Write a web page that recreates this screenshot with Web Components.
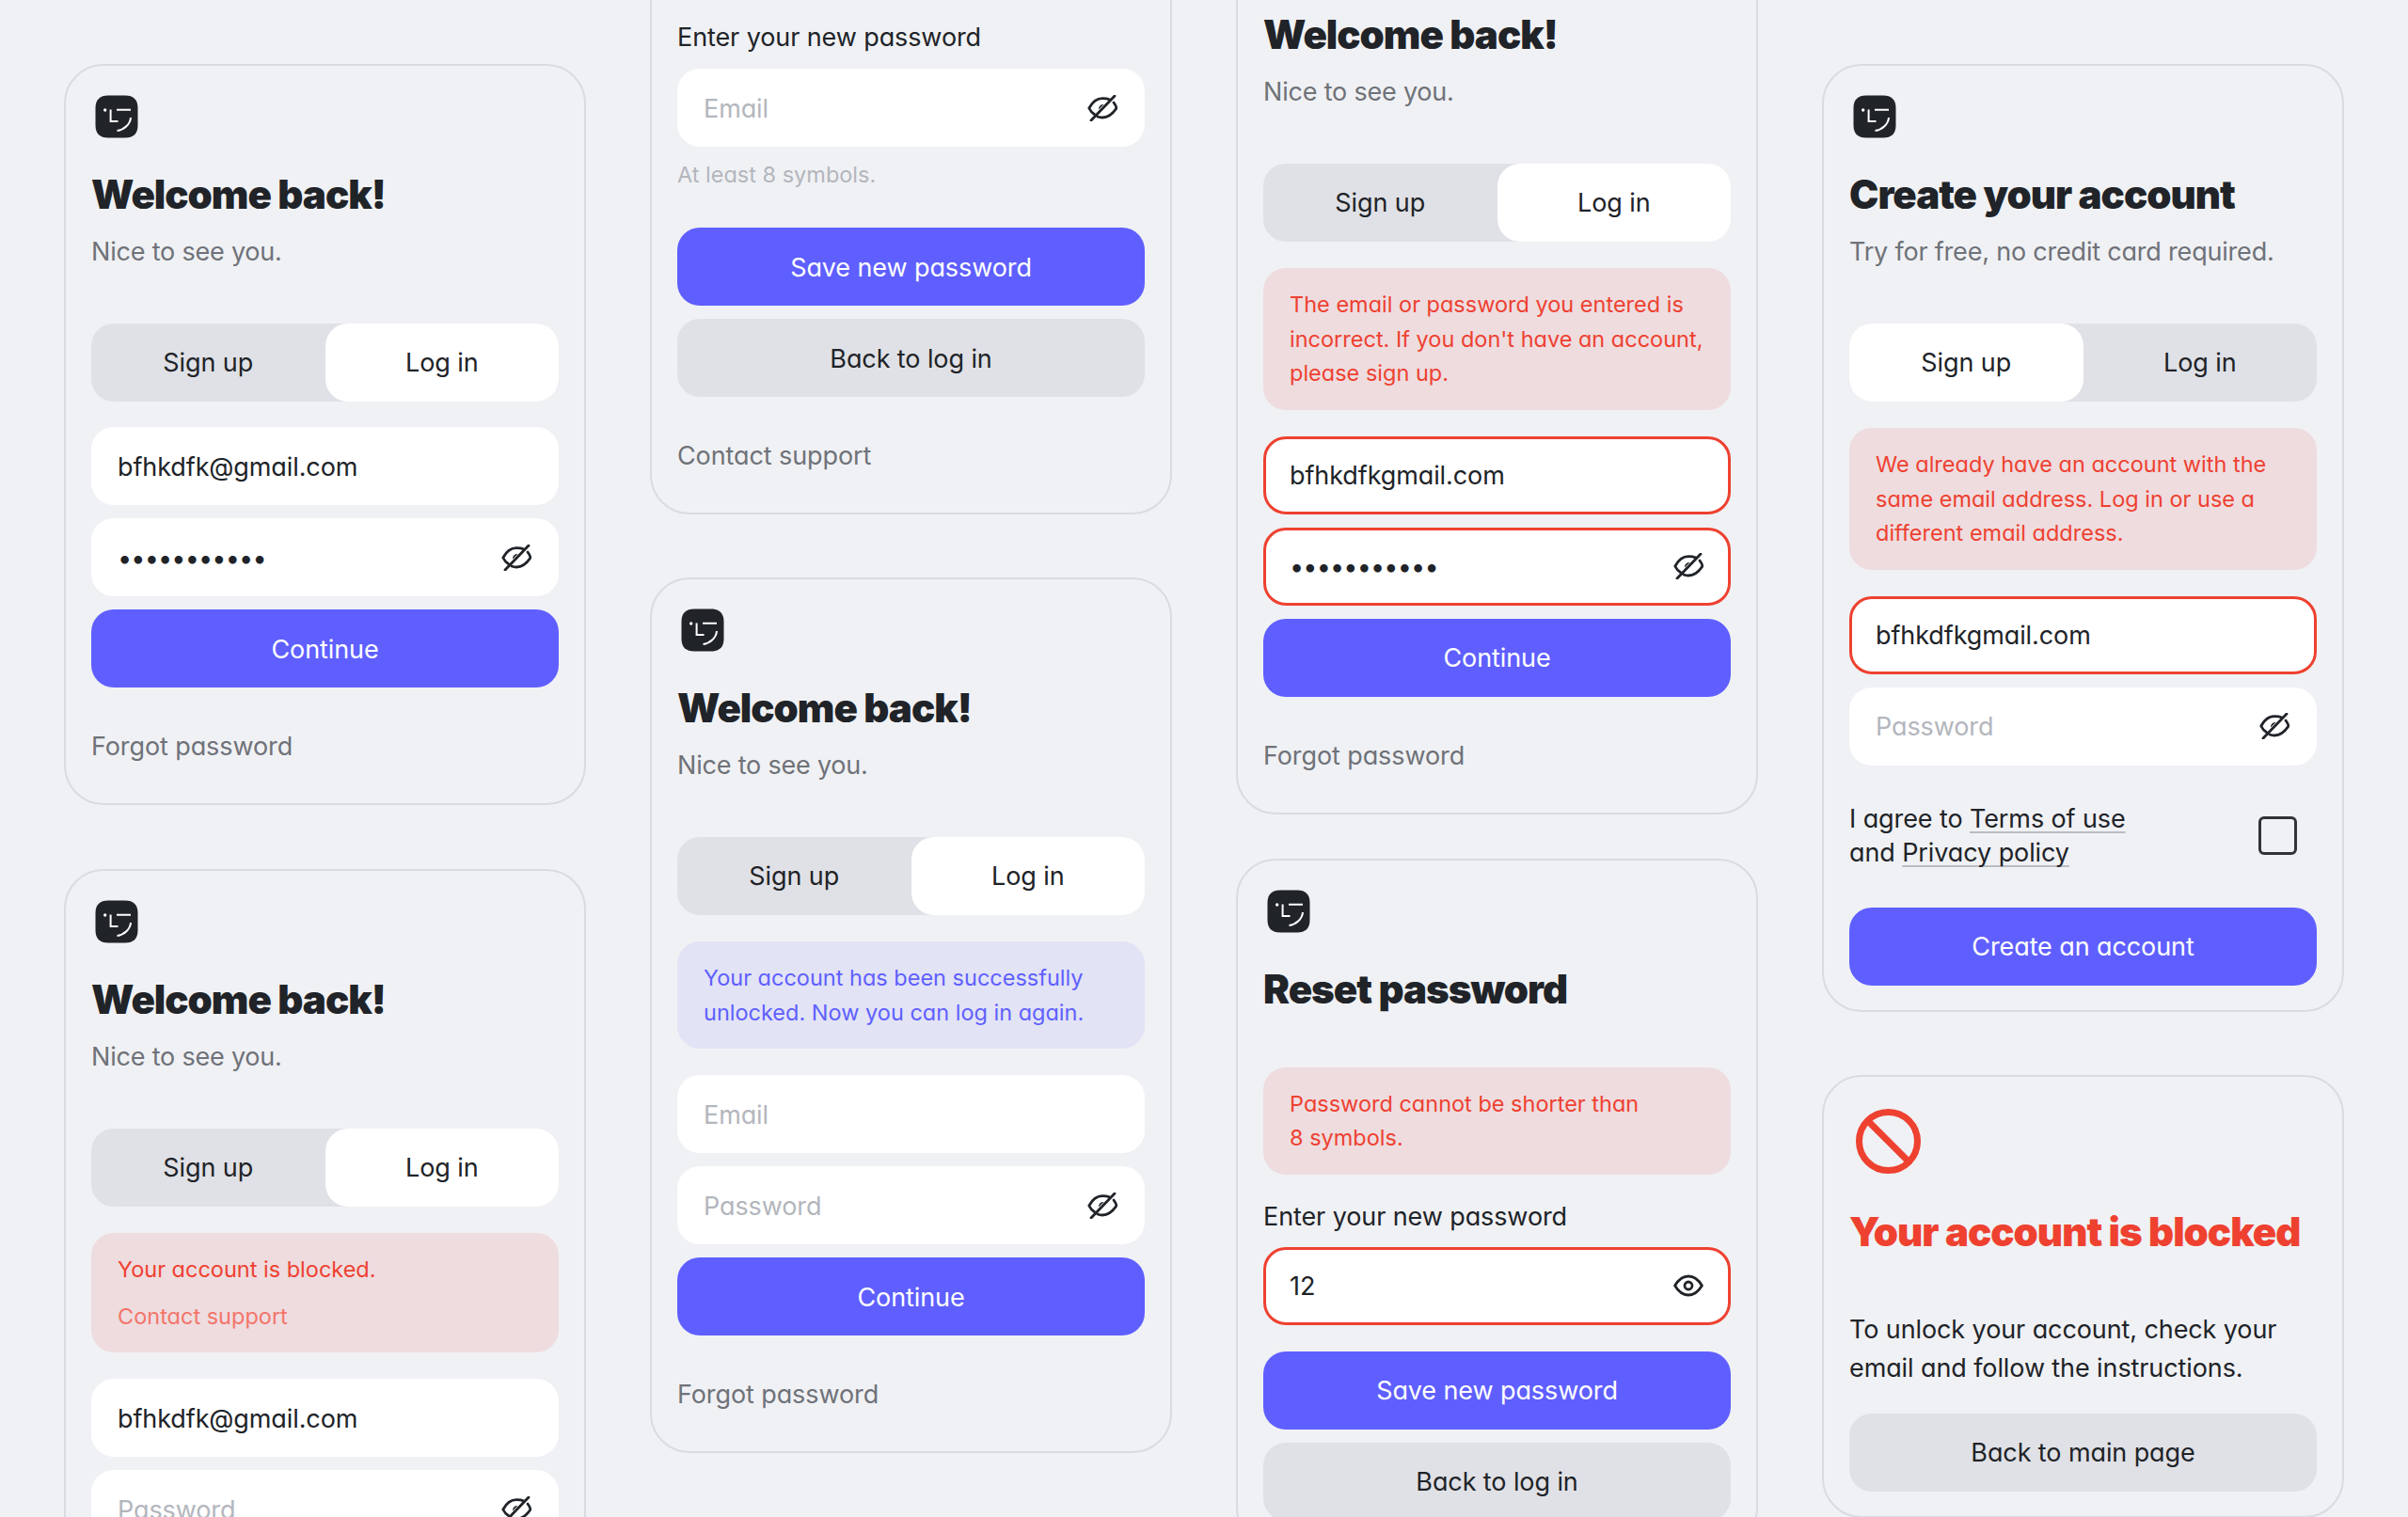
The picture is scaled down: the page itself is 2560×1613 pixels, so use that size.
<!DOCTYPE html>
<html lang="en">
<head>
<meta charset="utf-8">
<title>Auth screens</title>
<style>
  html, body { margin: 0; height: 1613px; overflow: hidden; background: #f0f1f4; }
  body { font-family: Inter, "Liberation Sans", sans-serif; color: #202328; }
</style>
</head>
<body>
<auth-board>
  <auth-column>
    <auth-card>
      <auth-logo></auth-logo>
      <auth-title>Welcome back!</auth-title>
      <auth-sub>Nice to see you.</auth-sub>
      <auth-tabs active="login"></auth-tabs>
      <auth-field>bfhkdfk@gmail.com</auth-field>
      <auth-field eye="off" secret>•••••••••••</auth-field>
      <auth-button>Continue</auth-button>
      <auth-link>Forgot password</auth-link>
    </auth-card>
    <auth-card>
      <auth-logo></auth-logo>
      <auth-title>Welcome back!</auth-title>
      <auth-sub>Nice to see you.</auth-sub>
      <auth-tabs active="login"></auth-tabs>
      <auth-notice kind="error">
        <div>Your account is blocked.</div>
        <div class="more">Contact support</div>
      </auth-notice>
      <auth-field>bfhkdfk@gmail.com</auth-field>
      <auth-field eye="off" placeholder>Password</auth-field>
    </auth-card>
  </auth-column>

  <auth-column style="--offset:-108px;--gap:67px">
    <auth-card style="--top:58px">
      <auth-label>Enter your new password</auth-label>
      <auth-field eye="off" placeholder>Email</auth-field>
      <auth-hint>At least 8 symbols.</auth-hint>
      <auth-button>Save new password</auth-button>
      <auth-button variant="ghost">Back to log in</auth-button>
      <auth-link>Contact support</auth-link>
    </auth-card>
    <auth-card>
      <auth-logo></auth-logo>
      <auth-title>Welcome back!</auth-title>
      <auth-sub>Nice to see you.</auth-sub>
      <auth-tabs active="login"></auth-tabs>
      <auth-notice kind="info">Your account has been successfully<br>unlocked. Now you can log in again.</auth-notice>
      <auth-field placeholder>Email</auth-field>
      <auth-field eye="off" placeholder>Password</auth-field>
      <auth-button>Continue</auth-button>
      <auth-link>Forgot password</auth-link>
    </auth-card>
  </auth-column>

  <auth-column style="--offset:-170px;--gap:47px">
    <auth-card>
      <auth-logo></auth-logo>
      <auth-title>Welcome back!</auth-title>
      <auth-sub>Nice to see you.</auth-sub>
      <auth-tabs active="login"></auth-tabs>
      <auth-notice kind="error">The email or password you entered is<br>incorrect. If you don't have an account,<br>please sign up.</auth-notice>
      <auth-field error>bfhkdfkgmail.com</auth-field>
      <auth-field eye="off" error secret>•••••••••••</auth-field>
      <auth-button>Continue</auth-button>
      <auth-link>Forgot password</auth-link>
    </auth-card>
    <auth-card>
      <auth-logo></auth-logo>
      <auth-title spaced>Reset password</auth-title>
      <auth-notice kind="error">Password cannot be shorter than<br>8 symbols.</auth-notice>
      <auth-label style="margin-top:-3px;margin-bottom:12px">Enter your new password</auth-label>
      <auth-field eye="on" error style="margin-bottom:28px">12</auth-field>
      <auth-button>Save new password</auth-button>
      <auth-button variant="ghost">Back to log in</auth-button>
    </auth-card>
  </auth-column>

  <auth-column style="--gap:67px">
    <auth-card>
      <auth-logo></auth-logo>
      <auth-title>Create your account</auth-title>
      <auth-sub>Try for free, no credit card required.</auth-sub>
      <auth-tabs active="signup"></auth-tabs>
      <auth-notice kind="error">We already have an account with the<br>same email address. Log in or use a<br>different email address.</auth-notice>
      <auth-field error>bfhkdfkgmail.com</auth-field>
      <auth-field eye="off" placeholder>Password</auth-field>
      <auth-agree>I agree to <a>Terms of use</a><br>and <a>Privacy policy</a></auth-agree>
      <auth-button>Create an account</auth-button>
    </auth-card>
    <auth-card>
      <auth-block-icon></auth-block-icon>
      <auth-title spaced danger>Your account is blocked</auth-title>
      <auth-text>To unlock your account, check your<br>email and follow the instructions.</auth-text>
      <auth-button variant="ghost">Back to main page</auth-button>
    </auth-card>
  </auth-column>
</auth-board>

<script>
const eyeOff = `<svg width="32" height="28" viewBox="0 0 32 28" fill="none" stroke="#202328" stroke-width="2.8" stroke-linecap="round" stroke-linejoin="round">
  <path d="M24 5C21.5 4 19 3.7 16 3.7C10 3.7 5 8 1.8 14C3 16.5 5 19 7.5 20.5"/>
  <path d="M28 8C29.5 10 30.5 12 31 14C27 20 22 24 16 24C14 24 12.5 23.7 11 23"/>
  <path d="M29 1L4 27"/>
  <path d="M17.5 10A5 5 0 0 0 12 15.5Z" fill="#202328" stroke="none"/>
</svg>`;
const eyeOn = `<svg width="32" height="24" viewBox="0 0 32 24" fill="none" stroke="#202328" stroke-width="2.8" stroke-linejoin="round">
  <path d="M1.6 12C5.5 5.5 10.5 2 16 2C21.5 2 26.5 5.5 30.4 12C26.5 18.5 21.5 22 16 22C10.5 22 5.5 18.5 1.6 12Z"/>
  <circle cx="16" cy="12" r="4"/>
</svg>`;

// small helper, every element is just styles + markup in an open shadow root
function component(name, css, html) {
  customElements.define(name, class extends HTMLElement {
    connectedCallback() {
      this.attachShadow({ mode: 'open' });
      const body = typeof html === 'function' ? html(this) : html;
      this.shadowRoot.innerHTML = `<style>${css}</style>${body}`;
    }
  });
}

const copy = `
  font-size: 27px;
  letter-spacing: -0.1px;
  font-feature-settings: "cv11";
`;
const fieldBox = `
  box-sizing: border-box;
  height: 83px;
  border-radius: 24px;
  ${copy}
`;

component('auth-board', `
  :host {
    display: grid;
    grid-template-columns: repeat(4, 555px);
    column-gap: 68px;
    align-items: start;
    padding: 68px;
  }
`, '<slot></slot>');

component('auth-column', `
  :host {
    display: flex;
    flex-direction: column;
    gap: var(--gap, 68px);
    margin-top: var(--offset, 0);
  }
`, '<slot></slot>');

component('auth-card', `
  :host {
    display: flex;
    flex-direction: column;
    box-sizing: border-box;
    padding: var(--top, 31px) 27px 26px;
    border: 2px solid #d9dbe1;
    border-radius: 42px;
  }
`, '<slot></slot>');

component('auth-logo', `
  :host { display: block; height: 46px; margin-left: 4px; }
  svg { display: block; }
`, `<svg width="46" height="46" viewBox="0 0 46 46" fill="none">
  <path d="M14 .5H32C41 .5 45.5 5 45.5 14V32C45.5 41 41 45.5 32 45.5H14C5 45.5 .5 41 .5 32V14C.5 5 5 .5 14 .5Z" fill="#202328"/>
  <circle cx="10.7" cy="16" r="1.7" fill="#fff"/>
  <path d="M16.6 15.5V28H24.5M23 15.7H38M38 24C37.5 31 31 37 23.5 38" stroke="#fff" stroke-width="2"/>
</svg>`);

component('auth-block-icon', `
  :host { display: block; height: 69px; margin: 3px 0 2px 7px; }
  svg { display: block; }
`, `<svg width="69" height="69" viewBox="0 0 69 69" fill="none" stroke="#ee4130" stroke-width="7">
  <circle cx="34.5" cy="34.5" r="31"/>
  <path d="M13 13L56 56"/>
</svg>`);

component('auth-title', `
  :host {
    display: block;
    margin: 35px 0 16px;
    font-size: 42px;
    line-height: 50px;
    font-weight: 900;
    letter-spacing: -1px;
    white-space: nowrap;
  }
  :host([spaced]) { margin-bottom: 57px; }
  :host([danger]) { color: #ee4130; }
`, '<slot></slot>');

component('auth-sub', `
  :host {
    display: block;
    margin-bottom: 56px;
    line-height: 40px;
    color: #6f7279;
    ${copy}
    letter-spacing: -0.2px;
  }
`, '<slot></slot>');

component('auth-tabs', `
  :host {
    display: grid;
    grid-template-columns: 1fr 1fr;
    margin-bottom: 27px;
    background: #e0e1e6;
    ${fieldBox}
  }
  span { display: flex; align-items: center; justify-content: center; border-radius: 24px; }
  .on { background: #fff; }
`, el => {
  const login = el.getAttribute('active') === 'login';
  return `<span class="${login ? '' : 'on'}">Sign up</span><span class="${login ? 'on' : ''}">Log in</span>`;
});

component('auth-field', `
  :host {
    display: flex;
    align-items: center;
    justify-content: space-between;
    margin-bottom: 14px;
    padding: 1px 28px 0;
    background: #fff;
    ${fieldBox}
  }
  :host([error]) { border: 3px solid #ee4130; padding: 1px 25px 0; }
  :host([placeholder]) { color: #b3b6bd; }
  :host([secret]) { letter-spacing: -0.85px; }
  svg { flex: none; margin: -1px 1px 0 0; }
`, el => {
  const eye = el.getAttribute('eye');
  return `<span><slot></slot></span>${eye === 'off' ? eyeOff : eye === 'on' ? eyeOn : ''}`;
});

component('auth-button', `
  :host {
    display: flex;
    align-items: center;
    justify-content: center;
    margin-bottom: 14px;
    padding-top: 1px;
    background: #5f5fff;
    color: #fff;
    ${fieldBox}
  }
  :host([variant="ghost"]) { background: #e0e1e6; color: #202328; }
  :host(:last-child) { margin-bottom: 0; }
`, '<slot></slot>');

component('auth-link', `
  :host {
    display: block;
    margin: 29px 0 14px;
    line-height: 40px;
    color: #6f7279;
    ${copy}
  }
`, '<slot></slot>');

component('auth-label', `
  :host {
    display: block;
    margin-bottom: 13px;
    line-height: 40px;
    ${copy}
  }
`, '<slot></slot>');

component('auth-hint', `
  :host {
    display: block;
    margin: -2px 0 38px;
    font-size: 23.5px;
    line-height: 36px;
    color: #b3b6bd;
    font-feature-settings: "cv11";
  }
`, '<slot></slot>');

component('auth-notice', `
  :host {
    display: block;
    margin: 1px 0 28px;
    padding: 21px 28px 20px;
    border-radius: 24px;
    font-size: 23.5px;
    line-height: 36.5px;
    white-space: nowrap;
    font-feature-settings: "cv11";
  }
  :host([kind="error"]) { background: #eedcdf; color: #ee4130; }
  :host([kind="info"]) { background: #e2e3f5; color: #5f5fff; }
  ::slotted(.more) { margin-top: 13px; color: #f3756a; }
`, '<slot></slot>');

component('auth-agree', `
  :host {
    display: flex;
    align-items: center;
    justify-content: space-between;
    margin: 25px 0 40px;
    padding-right: 21px;
    line-height: 36px;
    ${copy}
  }
  ::slotted(a) {
    text-decoration: underline 2px #b9bcc3;
    text-underline-offset: 4px;
    text-decoration-skip-ink: none;
  }
  i {
    box-sizing: border-box;
    width: 41px;
    height: 41px;
    border: 3px solid #303338;
    border-radius: 6px;
  }
`, '<span><slot></slot></span><i></i>');

component('auth-text', `
  :host {
    display: block;
    margin: 1px 0 28px;
    line-height: 41px;
    ${copy}
  }
`, '<slot></slot>');
</script>
</body>
</html>
